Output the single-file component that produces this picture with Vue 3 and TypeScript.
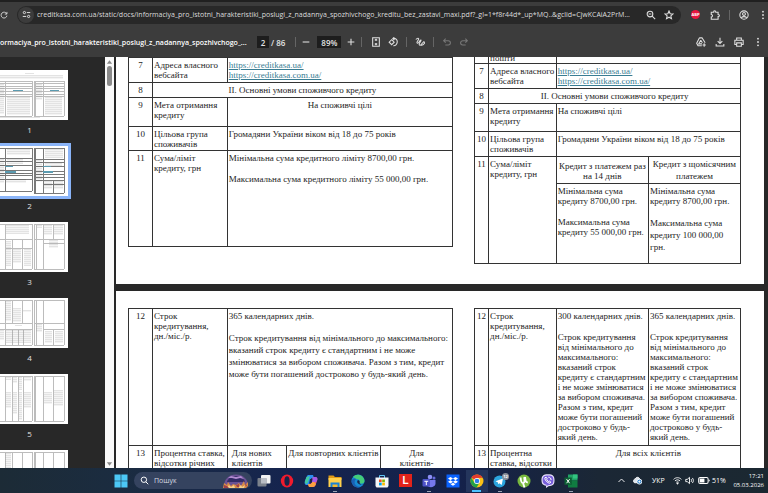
<script setup lang="ts">
import { ref } from 'vue'

interface Block { x: number; y: number; w: number; h: number }
interface Thumb { page: number; v: number[][]; h: number[][]; blocks: Block[]; links?: Block[]; ink: string }

const url = ref('creditkasa.com.ua/static/docs/informaciya_pro_istotni_harakteristiki_poslugi_z_nadannya_spozhivchogo_kreditu_bez_zastavi_maxi.pdf?_gl=1*f8r44d*_up*MQ..&gclid=CjwKCAiA2PrM...')
const pageNo = ref('2')
const zoom = ref('89%')
const query = ref('')

const b = (x: number, y: number, w: number, h: number): Block => ({ x, y, w, h })

// v: [x, y1, y2], h: [y, x1, x2]
const thumbs: Thumb[] = [
  {
    page: 1, ink: '#999999',
    v: [[5, 11, 46], [32, 11, 46], [34, 11, 46], [35, 11, 46], [43, 11, 46], [64, 11, 46]],
    h: [[11, 0, 32], [13, 0, 32], [16, 0, 32], [18, 0, 32], [21, 0, 32], [24, 0, 32], [26, 0, 32], [46, 0, 32],
      [11, 34, 64], [13, 34, 64], [16, 34, 64], [18, 34, 64], [21, 34, 64], [24, 34, 64], [26, 34, 64], [46, 34, 64]],
    blocks: [b(25, 3, 9, 1), b(0, 5, 63, 4), b(0, 14, 4, 30), b(7, 27, 23, 18), b(36, 14, 6, 16), b(45, 27, 17, 18), b(0, 47, 40, 1)],
    links: [b(13, 20, 10, 1), b(50, 20, 9, 1)],
  },
  {
    page: 2, ink: '#333333',
    v: [[5, 2, 45], [32, 2, 45], [34, 2, 47], [35, 2, 47], [43, 2, 47], [53, 35, 47], [64, 2, 47]],
    h: [[2, 0, 32], [12, 0, 32], [15, 0, 32], [19, 0, 32], [24, 0, 32], [27, 0, 32], [29, 0, 32], [33, 0, 32], [45, 0, 32],
      [2, 34, 64], [13, 34, 64], [16, 34, 64], [20, 34, 64], [25, 34, 64], [28, 34, 64], [31, 34, 64], [34, 34, 64], [38, 43, 64], [47, 34, 64]],
    blocks: [b(7, 3, 23, 6), b(0, 13, 4, 24), b(7, 13, 16, 5), b(10, 27, 14, 1), b(6, 33, 20, 4), b(45, 3, 18, 9), b(36, 14, 6, 22), b(45, 17, 17, 3), b(44, 35, 8, 8), b(54, 35, 9, 8)],
    links: [b(5, 20, 8, 1), b(5, 25, 11, 2), b(43, 20, 8, 1), b(43, 25, 10, 2)],
  },
  {
    page: 3, ink: '#999999',
    v: [[5, 2, 47], [12, 18, 47], [22, 18, 47], [32, 2, 47], [34, 2, 47], [36, 2, 47], [43, 2, 47], [53, 2, 18], [64, 2, 47]],
    h: [[2, 0, 32], [17, 0, 32], [26, 5, 32], [47, 0, 32], [2, 34, 64], [17, 34, 64], [21, 43, 64], [47, 34, 64]],
    blocks: [b(6, 3, 23, 9), b(6, 19, 5, 25), b(13, 27, 8, 14), b(24, 27, 7, 17), b(37, 3, 5, 3), b(44, 3, 8, 10), b(54, 3, 9, 10), b(49, 18, 9, 8)],
  },
  {
    page: 4, ink: '#999999',
    v: [[5, 2, 47], [12, 2, 25], [12, 31, 47], [18, 31, 47], [22, 2, 25], [23, 31, 47], [32, 2, 47], [34, 2, 47], [36, 2, 47], [43, 2, 47], [53, 31, 47], [64, 2, 47]],
    h: [[2, 0, 32], [25, 0, 32], [31, 0, 32], [47, 0, 32], [2, 34, 64], [25, 34, 64], [31, 43, 64], [47, 34, 64]],
    blocks: [b(5, 3, 6, 20), b(13, 10, 8, 14), b(23, 12, 8, 2), b(15, 27, 7, 1), b(0, 32, 4, 10), b(6, 32, 25, 13), b(36, 26, 6, 8), b(45, 33, 7, 12), b(55, 33, 8, 12)],
  },
  {
    page: 5, ink: '#999999',
    v: [[5, 2, 47], [12, 2, 47], [18, 2, 47], [23, 2, 47], [32, 2, 47], [34, 2, 47], [35, 2, 47], [43, 2, 47], [53, 2, 47], [64, 2, 47]],
    h: [[2, 0, 32], [47, 0, 32], [2, 34, 64], [47, 34, 64]],
    blocks: [b(6, 3, 5, 3), b(13, 3, 4, 6), b(19, 3, 3, 13), b(24, 3, 7, 4), b(6, 18, 5, 16), b(13, 18, 4, 22), b(19, 18, 3, 28), b(24, 18, 7, 16), b(44, 18, 8, 12), b(54, 16, 9, 16)],
  },
  {
    page: 6, ink: '#999999',
    v: [[5, 2, 47], [12, 2, 47], [22, 2, 47], [32, 2, 47], [34, 2, 47], [35, 2, 47], [43, 2, 47], [53, 2, 47], [64, 2, 47]],
    h: [[2, 0, 32], [47, 0, 32], [2, 34, 64], [47, 34, 64]],
    blocks: [b(5, 3, 6, 20)],
  },
]

const labelled = 5

function rows(block: Block): number[] {
  const out: number[] = []
  for (let y = block.y; y < block.y + block.h; y += 2) out.push(y)
  return out
}
</script>

<template>
  <div class="window">
    <header class="chrome">
      <div class="address-row">
        <button class="ico reload" aria-label="Reload">
          <svg viewBox="0 0 12 12"><path d="M10 4.2A4.4 4.4 0 1 0 10.4 7M10.4 1.4v3.2H7.2" /></svg>
        </button>
        <div class="omnibox">
          <span class="site">
            <svg viewBox="0 0 12 12"><circle cx="3.2" cy="3.4" r="1.5" /><path d="M6.4 3.4h4.6M1 8.6h4.6" /><circle cx="8.8" cy="8.6" r="1.5" /></svg>
          </span>
          <input v-model="url" class="url" aria-label="Address" spellcheck="false">
          <button class="ico" aria-label="Zoom">
            <svg viewBox="0 0 12 12"><circle cx="4.8" cy="4.8" r="3.4" /><path d="M7.4 7.4l3.6 3.6M3.2 4.8h3.2" /></svg>
          </button>
          <button class="ico star" aria-label="Bookmark">
            <svg viewBox="0 0 12 12"><path d="M6 1.2l1.4 3.2 3.5.3-2.7 2.3.8 3.5L6 8.7l-3 1.8.8-3.5L1.1 4.7l3.5-.3z" /></svg>
          </button>
        </div>
        <div class="extensions">
          <button class="ico abp" aria-label="ABP">ABP</button>
          <button class="ico puzzle" aria-label="Extensions">
            <svg viewBox="0 0 12 12"><path d="M1.5 2.6h3V2a1.2 1.2 0 0 1 2.4 0v.6h2.8v2.8h.4a1.2 1.2 0 0 1 0 2.4h-.4V11H1.5V8.4a1.5 1.5 0 0 0 0-3z" /></svg>
          </button>
          <i class="bar"></i>
          <button class="ico" aria-label="Profile">
            <svg viewBox="0 0 12 12"><circle cx="6" cy="6" r="5" /><circle cx="6" cy="4.7" r="1.7" /><path d="M2.6 9.4c1.8-2 5-2 6.8 0" /></svg>
          </button>
          <button class="ico" aria-label="Menu">
            <svg viewBox="0 0 12 12" class="solid"><circle cx="6" cy="2" r="1.1" /><circle cx="6" cy="6" r="1.1" /><circle cx="6" cy="10" r="1.1" /></svg>
          </button>
        </div>
      </div>

      <div class="pdf-row">
        <div class="title">ormaciya_pro_istotni_harakteristiki_poslugi_z_nadannya_spozhivchogo_...</div>
        <div class="tools">
          <input v-model="pageNo" class="field page-field" aria-label="Page">
          <span class="total">/ 86</span>
          <i class="bar"></i>
          <button class="ico" aria-label="Zoom out"><svg viewBox="0 0 12 12"><path d="M2 6h8" /></svg></button>
          <input v-model="zoom" class="field zoom-field" aria-label="Zoom level">
          <button class="ico" aria-label="Zoom in"><svg viewBox="0 0 12 12"><path d="M2 6h8M6 2v8" /></svg></button>
          <i class="bar"></i>
        </div>
        <div class="tools view">
          <button class="ico" aria-label="Fit to page">
            <svg viewBox="0 0 12 12"><path d="M2 .9h8v10.2H2zM4.6 4L6 2.6 7.4 4M4.6 8L6 9.4 7.4 8M6 3v1.6M6 7.4V9" /></svg>
          </button>
          <button class="ico" aria-label="Rotate">
            <svg viewBox="0 0 12 12"><path d="M4.4 3.2l3 3-3 3-3-3zM6 1.8c3-.8 5.3 1.6 5.1 4.3S8.8 10.8 6.4 10.5M7.6.2L5.8 1.9l1.8 1.7" /></svg>
          </button>
          <i class="bar"></i>
          <button class="ico" aria-label="Draw">
            <svg viewBox="0 0 12 12"><path d="M1 3c2-2.4 4-1.800 3.200 0S1.400 6.600 3 7.400 6 3 7 3.600 5 7 5 8.600s1.600 1.400 2.200.6M7.800 9.800l.4-1.800L10.600 5.600 12 7 9.600 9.400z" /></svg>
          </button>
          <i class="bar"></i>
          <button class="ico dim" aria-label="Undo"><svg viewBox="0 0 12 12"><path d="M4.400 2L2 4.400l2.400 2.400M2 4.400h5.500a2.600 2.600 0 0 1 0 5.200H4" /></svg></button>
          <button class="ico dim" aria-label="Redo"><svg viewBox="0 0 12 12"><path d="M7.600 2L10 4.400 7.600 6.800M10 4.400H4.500a2.600 2.600 0 0 0 0 5.200H8" /></svg></button>
        </div>
        <div class="actions">
          <button class="ico" aria-label="Save to Drive">
            <svg viewBox="0 0 12 12"><path d="M4.200 1h3L11 7M4.200 1L.8 7.600 2.400 10.400H7M5.700 3.800L3.200 8.200h4M5.700 3.800l2 3.200M9.800 7.600v4M7.800 9.600h4" /></svg>
          </button>
          <button class="ico" aria-label="Download">
            <svg viewBox="0 0 12 12"><path d="M6 1v6.600M3.200 5L6 7.800 8.800 5M1.400 8.400v2.400h9.200V8.400" /></svg>
          </button>
          <button class="ico" aria-label="Print">
            <svg viewBox="0 0 12 12"><path d="M3.200 3.800V1.200h5.600v2.600M3.200 9H1V3.900h10V9H8.800M3.200 7h5.600v4H3.200z" /></svg>
          </button>
          <button class="ico" aria-label="More">
            <svg viewBox="0 0 12 12" class="solid"><circle cx="6" cy="2" r="1.1" /><circle cx="6" cy="6" r="1.1" /><circle cx="6" cy="10" r="1.1" /></svg>
          </button>
        </div>
      </div>
    </header>

    <main class="viewer">
      <nav class="sidebar" aria-label="Pages">
        <a v-for="t in thumbs" :key="t.page" :href="'#p' + t.page" class="thumb" :class="{ current: t.page === 2 }">
          <svg viewBox="0 0 68 50" shape-rendering="crispEdges">
            <rect width="68" height="50" fill="#fff" />
            <template v-for="(k, i) in t.blocks" :key="'b' + i">
              <rect v-for="y in rows(k)" :key="y" :x="k.x" :y="y" :width="k.w" height="1" fill="#d4d4d4" />
              <rect :x="k.x" :y="k.y" :width="k.w" :height="k.h" fill="#ececec" opacity="0.6" />
            </template>
            <g :fill="t.ink" opacity="0.65">
              <rect v-for="(l, i) in t.v" :key="'v' + i" :x="l[0]" :y="l[1]" width="1" :height="l[2] - l[1]" />
              <rect v-for="(l, i) in t.h" :key="'h' + i" :x="l[1]" :y="l[0]" :width="l[2] - l[1]" height="1" />
            </g>
            <rect v-for="(k, i) in t.links ?? []" :key="'l' + i" :x="k.x" :y="k.y" :width="k.w" :height="k.h" fill="#5b9bb0" />
          </svg>
          <span v-if="t.page <= labelled">{{ t.page }}</span>
        </a>
      </nav>
      <div class="scrollbar" aria-hidden="true">
        <svg viewBox="0 0 8 6"><path d="M4 1l3 4H1z" /></svg>
        <i></i>
        <svg viewBox="0 0 8 6" class="down"><path d="M4 5l3-4H1z" /></svg>
      </div>

      <div class="pages">
        <section id="p2" class="page first">
          <table>
            <colgroup><col class="l-num"><col class="l-name"><col></colgroup>
            <tbody>
              <tr class="h25"><td class="num">7</td><td>Адреса власного<br>вебсайта</td><td><a href="#">https://creditkasa.ua/</a><br><a href="#">https://creditkasa.com.ua/</a></td></tr>
              <tr class="h15"><td class="num">8</td><td colspan="2" class="mid">ІІ. Основні умови споживчого кредиту</td></tr>
              <tr class="h29"><td class="num">9</td><td>Мета отримання<br>кредиту</td><td class="mid">На споживчі цілі</td></tr>
              <tr class="h24"><td class="num">10</td><td>Цільова група<br>споживачів</td><td>Громадяни України віком від 18 до 75 років</td></tr>
              <tr class="h96"><td class="num">11</td><td>Сума/ліміт<br>кредиту, грн</td><td><p>Мінімальна сума кредитного ліміту 8700,00 грн.</p><p class="next">Максимальна сума кредитного ліміту 55 000,00 грн.</p></td></tr>
            </tbody>
          </table>
          <table class="continued">
            <colgroup><col class="r-num"><col class="r-name"><col class="r-half"><col></colgroup>
            <tbody>
              <tr class="h6"><td></td><td><div class="cut"><span>пошти</span></div></td><td colspan="2"></td></tr>
              <tr class="h25"><td class="num">7</td><td>Адреса власного<br>вебсайта</td><td colspan="2"><a href="#">https://creditkasa.ua/</a><br><a href="#">https://creditkasa.com.ua/</a></td></tr>
              <tr class="h15"><td class="num">8</td><td colspan="3" class="mid">ІІ. Основні умови споживчого кредиту</td></tr>
              <tr class="h28"><td class="num">9</td><td>Мета отримання<br>кредиту</td><td colspan="2">На споживчі цілі</td></tr>
              <tr class="h25"><td class="num">10</td><td>Цільова група<br>споживачів</td><td colspan="2">Громадяни України віком від 18 до 75 років</td></tr>
              <tr class="h27"><td class="num" rowspan="2">11</td><td rowspan="2">Сума/ліміт<br>кредиту, грн</td><td class="mid low">Кредит з платежем раз<br>на 14 днів</td><td class="mid high loose">Кредит з щомісячним<br>платежем</td></tr>
              <tr class="h80">
                <td><p>Мінімальна сума<br>кредиту 8700,00 грн.</p><p class="next">Максимальна сума<br>кредиту 55 000,00 грн.</p></td>
                <td><p>Мінімальна сума<br>кредиту 8700,00 грн.</p><p class="next loose">Максимальна сума<br>кредиту 100 000,00<br>грн.</p></td>
              </tr>
            </tbody>
          </table>
        </section>

        <section id="p3" class="page second">
          <table>
            <colgroup><col class="l-num"><col class="l-name"><col class="l-new"><col class="l-repeat"><col></colgroup>
            <tbody>
              <tr class="h137">
                <td class="num">12</td><td>Строк<br>кредитування,<br>дн./міс./р.</td>
                <td colspan="3"><p>365 календарних днів.</p><p class="next loose">Строк кредитування від мінімального до максимального:<br>вказаний строк кредиту є стандартним і не може<br>змінюватися за вибором споживача. Разом з тим, кредит<br>може бути погашений достроково у будь-який день.</p></td>
              </tr>
              <tr class="h29"><td class="num">13</td><td>Процентна ставка,<br>відсотки річних</td><td class="inset">Для нових<br>клієнтів</td><td class="mid">Для повторних клієнтів</td><td class="mid">Для<br>клієнтів-</td></tr>
            </tbody>
          </table>
          <table>
            <colgroup><col class="r-num"><col class="r-name"><col class="r-half"><col></colgroup>
            <tbody>
              <tr class="h137">
                <td class="num">12</td><td>Строк<br>кредитування,<br>дн./міс./р.</td>
                <td v-for="days in [300, 365]" :key="days"><p>{{ days }} календарних днів.</p><p class="next">Строк кредитування<br>від мінімального до<br>максимального:<br>вказаний строк<br>кредиту є стандартним<br>і не може змінюватися<br>за вибором споживача.<br>Разом з тим, кредит<br>може бути погашений<br>достроково у будь-<br>який день.</p></td>
              </tr>
              <tr class="h29"><td class="num">13</td><td>Процентна<br>ставка, відсотки</td><td colspan="2" class="mid">Для всіх клієнтів</td></tr>
            </tbody>
          </table>
        </section>
      </div>
    </main>

    <footer class="taskbar">
      <button class="start" aria-label="Start">
        <svg viewBox="0 0 14 14"><path fill="#4cc8f6" d="M.5.5h6.200v6.200H.5zM7.300.5h6.200v6.200H7.300zM.5 7.300h6.200v6.200H.5zM7.300 7.300h6.200v6.200H7.300z" /></svg>
      </button>
      <label class="search">
        <svg viewBox="0 0 12 12" class="lens"><circle cx="5.200" cy="5" r="3.600" /><path d="M7.800 7.800L11 11" /></svg>
        <input v-model="query" placeholder="Пошук" aria-label="Пошук">
        <svg viewBox="0 0 26 14" class="art">
          <path fill="#6a5193" d="M1 12C1 5 6 .5 13 .5S25 5 25 12z" />
          <path fill="#332b66" d="M4 8c1-4 5-6 9-6s8 2 9 6z" />
          <path fill="#b28ad0" d="M5 4l3-2 5 1 5-1 3 3-4-1-4 1-4-1z" />
          <path fill="#d98b45" d="M0 14l1-5 3 2 1-3 3 4 2-2 3 1 3-2 2 3 3-5 1 4 3-3v4l-2 2z" />
          <path fill="#f6cf8b" d="M4 14l2-3 2 2 3-2 1 3zM16 13l2-2 1 2 3-2-1 3h-5z" />
          <path fill="#9d3f4b" d="M1 11l3 1 2 2H1zM13 11l3-1v3h-2zM22 10l2 1-1 2z" />
        </svg>
      </label>

      <div class="apps">
        <button aria-label="Task view"><svg viewBox="0 0 14 14"><rect x="4" y="1" width="9.500" height="8.500" rx="1" fill="#f2f2f2" /><rect x=".5" y="4" width="9" height="8.500" rx="1" fill="#7c828c" /><path fill="#b9bdc4" d="M4 4h5.500v5.500H4z" /></svg></button>
        <button aria-label="Opera"><svg viewBox="0 0 14 14"><ellipse cx="7" cy="7" rx="6.200" ry="6.500" fill="#f21b2d" /><ellipse cx="7" cy="7" rx="2.600" ry="4.700" fill="#18254a" /></svg></button>
        <button aria-label="Copilot"><svg viewBox="0 0 14 14"><path fill="#2b8df0" d="M4 1h5l1 3H7.500L5 11H3C.5 11 .3 9 1 7l1.500-4Q3 1.300 4 1z" /><path fill="#43c8a0" d="M1 7l1.500-4L6 2 4.500 7 3 10Q.3 10 1 7z" /><path fill="#f15b7a" d="M10 13H5l-1-3h2.500L9 3h2c2.500 0 2.700 2 2 4l-1.500 4Q11 12.700 10 13z" /><path fill="#f9a13f" d="M5 13l-1-3h3l2-3 3 3-1 2-2 1z" /><path fill="#a45ae8" d="M9 3h2q3 0 2.300 3L12 8H7.500z" /><path fill="#18254a" d="M6 5h2.500L7.700 9H5.300z" /></svg></button>
        <button class="running" aria-label="Explorer"><svg viewBox="0 0 14 14"><path fill="#e09b16" d="M.5 1.500h5L7 3h6.500v3H.5z" /><path fill="#ffd04c" d="M.5 4h13v9H.5z" /><path fill="#1982d5" d="M2.500 8.500h9V13h-9z" /><path fill="#f5b92c" d="M4.500 10.500h5V13h-5z" /></svg></button>
        <button aria-label="Edge"><svg viewBox="0 0 14 14"><circle cx="7" cy="7" r="6.500" fill="#168bd2" /><path fill="#44cc79" d="M2 3c3-4 11-3 11.500 4 0 3-4 3-5 2 1-2 0-4-3-4z" /><path fill="#1a60b4" d="M5 5c-3 3-1 8 5 7.800-5 2-9-1-9.500-5.300C1 4 4 4 5 5z" /><path fill="#18254a" d="M7 6c-2 2 0 4.500 3 4.500l2.500-.8c-1.500 1-4 .6-4-.9.5-1 0-2.500-1.500-2.800z" /></svg></button>
        <button aria-label="Store"><svg viewBox="0 0 14 14"><path fill="none" stroke="#5fc4f4" d="M4.500 4V1.500h5V4" /><path fill="#f4f6f8" d="M.5 3.500h13V12l-1 1.500h-11L.5 12z" /><path fill="#f25022" d="M4 5.500h2.700v2.700H4z" /><path fill="#7fba00" d="M7.200 5.500h2.700v2.700H7.200z" /><path fill="#00a4ef" d="M4 8.700h2.700v2.700H4z" /><path fill="#ffb900" d="M7.200 8.700h2.700v2.700H7.200z" /></svg></button>
        <button aria-label="L"><span class="tile-l">L</span></button>
        <button class="running" aria-label="Teams"><svg viewBox="0 0 14 14"><circle cx="8" cy="3" r="2.300" fill="#8d8ff5" /><circle cx="12" cy="4" r="1.500" fill="#6668dd" /><path fill="#7578ed" d="M4 6h9.500v4c-1 4-7 4-9 1z" /><rect x=".5" y="5" width="7.500" height="7.500" rx="1" fill="#4d52c8" /><path stroke="#fff" d="M2.400 7.300h3.800M4.300 7.300v3.800" /></svg></button>
        <button aria-label="Dropbox"><svg viewBox="0 0 14 14"><path fill="#0a62ff" d="M.5.500h13v13H.500z" /><path fill="#fff" d="M4.500 3L7 4.600 4.500 6.200 2 4.600zM9.500 3L12 4.600 9.500 6.200 7 4.600zM4.500 6.200L7 7.800 4.500 9.400 2 7.800zM9.500 6.200L12 7.800 9.500 9.400 7 7.800zM7 8.700l2.400 1.500L7 11.700l-2.400-1.500z" /></svg></button>
        <button class="running active" aria-label="Chrome"><svg viewBox="0 0 14 14"><circle cx="7" cy="7" r="6.500" fill="#fbc116" /><path fill="#e33b2e" d="M7 7L1.400 3.700A6.500 6.500 0 0 1 12.600 3.700L7 4z" /><path fill="#24a147" d="M1.400 3.700A6.500 6.500 0 0 0 6.600 13.500L9.600 8.500 7 10 4 8z" /><circle cx="7" cy="7" r="3" fill="#fff" /><circle cx="7" cy="7" r="2.300" fill="#2f7de9" /></svg></button>
        <button class="running" aria-label="Telegram"><svg viewBox="0 0 14 14"><circle cx="6.500" cy="7.500" r="6" fill="#2ca5df" /><path fill="#fff" d="M2.500 7.300L10 4.500 8.700 11 6.200 9.300 5 10.300V8.500z" /></svg><em>12</em></button>
        <button aria-label="uTorrent"><svg viewBox="0 0 14 14"><circle cx="7" cy="7" r="6.500" fill="#78b83f" /><path d="M3.600 3.500c.2 3 .6 5.700 2.500 5.600C8 9 7.600 6 7.200 3M8 3c.4 3.500.6 5.500 2.800 5.200M6 9l1.500 4.500" fill="none" stroke="#fff" stroke-width="1.900" /></svg></button>
        <button aria-label="Viber"><svg viewBox="0 0 14 14"><path fill="#e9e2fb" d="M7 .300c5 0 6.500 1.700 6.500 6S12 12 7.500 12.200L5 14v-2.200C1.500 11 .5 9.500.5 6.300.500 2 2 .300 7 .300z" /><path fill="#7960dc" d="M7 1.400c4.200 0 5.400 1.200 5.400 4.900S11.200 11 7 11.200l-1.500 1V10.800C2.500 10.200 1.600 9 1.600 6.300 1.600 2.600 2.800 1.400 7 1.400z" /><path fill="none" stroke="#fff" d="M4 3.600c-1 1.600 2.400 5.600 4.800 5.600l1-1.200-1.600-1-.8.600-1.700-1.900.6-.7-.9-1.600zM7.300 3.200c1.800 0 2.800 1.200 2.800 2.900" /></svg></button>
        <button class="running" aria-label="Excel"><svg viewBox="0 0 14 14"><path fill="#21a366" d="M4 .500h9.500v6H4z" /><path fill="#107c41" d="M4 6.500h9.500v7H4z" /><path fill="#33c481" d="M9 .500h4.500v4H9z" /><path fill="#0d5f34" d="M.5 3.500h7.300v7.300H.5z" /><path stroke="#fff" d="M2.600 5.200l3 4M5.600 5.200l-3 4" /></svg></button>
      </div>

      <div class="tray">
        <svg viewBox="0 0 12 12" class="up"><path d="M2 8l4-4 4 4" /></svg>
        <svg viewBox="0 0 12 12" class="cloud"><path fill="#dce3ea" d="M1 8c-1-3 1-4 2-4 1-3 5-3 6 0L5 9H2z" /><circle cx="8.500" cy="7.500" r="3.300" fill="#2b83cf" /><path d="M7 7.500h3M8.500 6v3" /></svg>
        <span class="lang">УКР</span>
        <svg viewBox="0 0 12 12" class="wifi"><path d="M.8 4.500c3-3 7.400-3 10.400 0M2.600 6.600c2-2 4.800-2 6.800 0M4.300 8.500c1-.9 2.400-.9 3.400 0" /><circle cx="6" cy="10" r=".8" fill="#fff" /></svg>
        <svg viewBox="0 0 12 12" class="sound"><path d="M1 4.500h2L6 1.800v8.400L3 7.500H1zM8 4c1 1.200 1 2.800 0 4M9.800 2.600c1.800 2 1.800 4.800 0 6.800" /></svg>
        <svg viewBox="0 0 14 10" class="battery"><rect x=".8" y="1.500" width="11" height="7" rx="1.800" /><path d="M13 4v2" /><path fill="#fff" stroke="none" d="M2 2.700h5.500v4.600H2z" /></svg>
        <span class="charge">51%</span>
        <span class="clock">17:21<br>05.03.2026</span>
      </div>
    </footer>
  </div>
</template>

<style>
body { margin: 0; background: #282828; overflow: hidden; }
</style>

<style scoped>
* { box-sizing: border-box; }
button, input { margin: 0; padding: 0; border: 0; background: none; color: inherit; font: inherit; outline: 0; }
p { margin: 0; }
.window { display: flex; flex-direction: column; height: 100vh; font-family: "Open Sans", "Noto Sans", sans-serif; font-size: 7px; color: #e3e3e3; }

.chrome { flex: none; height: 57px; background: #3c3c3c; border-top: 2px solid #202020; }
.address-row { display: flex; align-items: center; height: 25px; }
.ico { flex: none; display: flex; align-items: center; justify-content: center; width: 14px; height: 14px; }
.ico svg { width: 10px; height: 10px; fill: none; stroke: #dedede; stroke-width: 1.3; }
.ico svg.solid { fill: #dedede; stroke: none; }
.ico.dim svg { stroke: #777; }
.reload { width: 8px; margin-right: 9px; }
.omnibox { flex: 1; display: flex; align-items: center; height: 18px; padding: 0 5px 0 1px; border-radius: 9px; background: #282828; }
.omnibox .star { margin-left: 4px; }
.site { flex: none; display: flex; align-items: center; justify-content: center; width: 16px; height: 16px; margin-right: 3px; border-radius: 50%; background: #3c3c3c; }
.site svg { width: 9px; height: 9px; fill: none; stroke: #dedede; stroke-width: 1.3; }
.url { flex: 1; min-width: 0; height: 14px; color: #dcdcdc; }
.extensions { display: flex; align-items: center; width: 87px; padding-left: 10px; }
.extensions .ico { margin-right: 5px; }
.extensions .puzzle { margin-right: 7px; }
.extensions .bar { margin-right: 7px; }
.extensions .ico:last-child { margin: 0; }
.extensions .abp { width: 9px; height: 9px; margin-right: 8px; border-radius: 50%; background: #e8173f; color: #fff; font-size: 4px; font-weight: 700; }
.bar { flex: none; width: 1px; height: 10px; background: #656565; }

.pdf-row { display: flex; align-items: center; height: 30px; padding-right: 3px; }
.title { flex: none; width: 242px; white-space: nowrap; color: #fff; font-weight: 600; }
.tools { display: flex; align-items: center; margin-left: 15px; }
.tools .bar { margin: 0 3px; }
.tools.view { gap: 3px; margin-left: 4px; }
.field { height: 12px; background: #1d1d1d; text-align: center; font-weight: 600; font-size: 8px; }
.page-field { width: 12px; }
.total { margin: 0 7px 0 2px; font-size: 8px; font-weight: 600; }
.zoom-field { width: 24px; margin: 0 3px 0 4px; }
.actions { display: flex; gap: 5px; margin-left: auto; }

.viewer { flex: 1; min-height: 0; display: flex; overflow: hidden; background: #282828; }
.sidebar { flex: none; width: 105px; padding-top: 13px; overflow: hidden; }
.thumb { display: block; width: 68px; height: 76px; color: #e0e0e0; font-size: 8px; text-decoration: none; }
.thumb svg { display: block; width: 68px; height: 50px; }
.current svg { outline: 3px solid #8ab4f8; }
.thumb span { display: block; padding-right: 9px; line-height: 20px; text-align: center; }
.scrollbar { flex: none; display: flex; flex-direction: column; align-items: center; width: 9px; margin-right: 2px; padding: 2px 0 1px; background: #fafafa; }
.scrollbar svg { width: 7px; height: 6px; fill: #8a8a8a; }
.scrollbar i { width: 5px; height: 20px; margin-top: 1px; border-radius: 3px; background: #8a8a8a; }
.scrollbar .down { margin-top: auto; }

.pages { flex: 1; min-width: 0; padding-right: 4px; overflow: hidden; }
.page { display: grid; grid-template-columns: 325fr 267fr; gap: 21px; align-items: start; padding: 0 23px 0 12px; background: #fff; color: #1c1c1c; font: 9px/10px "Liberation Serif", serif; }
.first { height: 227px; margin-bottom: 7px; }
.second { padding-top: 17px; }
table { width: 100%; table-layout: fixed; border-collapse: collapse; }
td { padding: 2px 0 0 1px; border: 1px solid #333; vertical-align: top; white-space: nowrap; }
.continued tr:first-child td { border-top: 0; padding-top: 0; }
.num, .mid { padding-left: 0; text-align: center; }
.inset { padding-left: 4px; }
.low { padding-top: 4px; }
.high { padding-top: 1px; }
.loose { line-height: 12px; }
.next { margin-top: 11px; }
td a { color: #397d93; text-decoration: underline; }
.cut { display: flex; align-items: flex-end; height: 5px; overflow: hidden; }
.cut span { line-height: 8px; }
.l-num { width: 7.4%; }
.l-name { width: 23.1%; }
.l-new { width: 18.2%; }
.l-repeat { width: 29.1%; }
.r-num { width: 5.3%; }
.r-name { width: 25.4%; }
.r-half { width: 34.7%; }
.h6 { height: 6px; }
.h15 { height: 15px; }
.h24 { height: 24px; }
.h25 { height: 25px; }
.h27 { height: 27px; }
.h28 { height: 28px; }
.h29 { height: 29px; }
.h80 { height: 80px; }
.h96 { height: 96px; }
.h137 { height: 137px; }

.taskbar { flex: none; display: flex; align-items: center; height: 25px; padding: 0 4px 0 114px; background: linear-gradient(90deg, #1c2b36 0%, #1b2c40 15%, #15244f 38%, #14214a 60%, #1b2735 78%, #1b2831 100%); color: #fff; }
.start { flex: none; width: 14px; height: 14px; }
.start svg, .apps svg { display: block; width: 14px; height: 14px; }
.search { flex: none; display: flex; align-items: center; width: 118px; height: 17px; margin-left: 6px; padding: 0 3px 0 6px; border-radius: 9px; background: #35435f; }
.lens { flex: none; width: 9px; height: 9px; margin-right: 5px; fill: none; stroke: #fff; stroke-width: 1.3; }
.search input { flex: 1; min-width: 0; }
.search input::placeholder { color: #d5dae2; opacity: 1; }
.art { flex: none; width: 26px; height: 14px; }
.apps { flex: 1; display: grid; grid-template-columns: repeat(14, 1fr); height: 25px; }
.apps button { position: relative; display: flex; align-items: center; justify-content: center; }
.apps .running::after { content: ""; position: absolute; bottom: 1px; width: 4px; height: 1px; background: #9aa3b5; }
.apps .active { background: linear-gradient(#24355c, #24355c) center / 22px 22px no-repeat; }
.apps .active::after { width: 9px; height: 2px; background: #4cc2ff; }
.tile-l { width: 13px; height: 13px; background: #e2231a; font: 700 10px/13px "Liberation Sans", sans-serif; }
.apps em { position: absolute; top: 5px; right: 3px; width: 7px; height: 7px; border-radius: 50%; background: #8a8f99; font: 700 4px/7px "Open Sans", sans-serif; text-align: center; }
.tray { flex: none; display: flex; align-items: center; margin-left: 34px; }
.tray svg { flex: none; width: 9px; height: 9px; fill: none; stroke: #fff; stroke-width: 1.2; }
.tray .cloud { margin: 0 10px 0 7px; }
.lang { width: 13px; margin-right: 8px; }
.tray .sound { margin: 0 4px 0 3px; }
.tray .battery { width: 12px; margin-right: 2px; }
.charge { width: 14px; }
.clock { width: 38px; font-size: 6px; line-height: 9px; text-align: right; }
</style>
